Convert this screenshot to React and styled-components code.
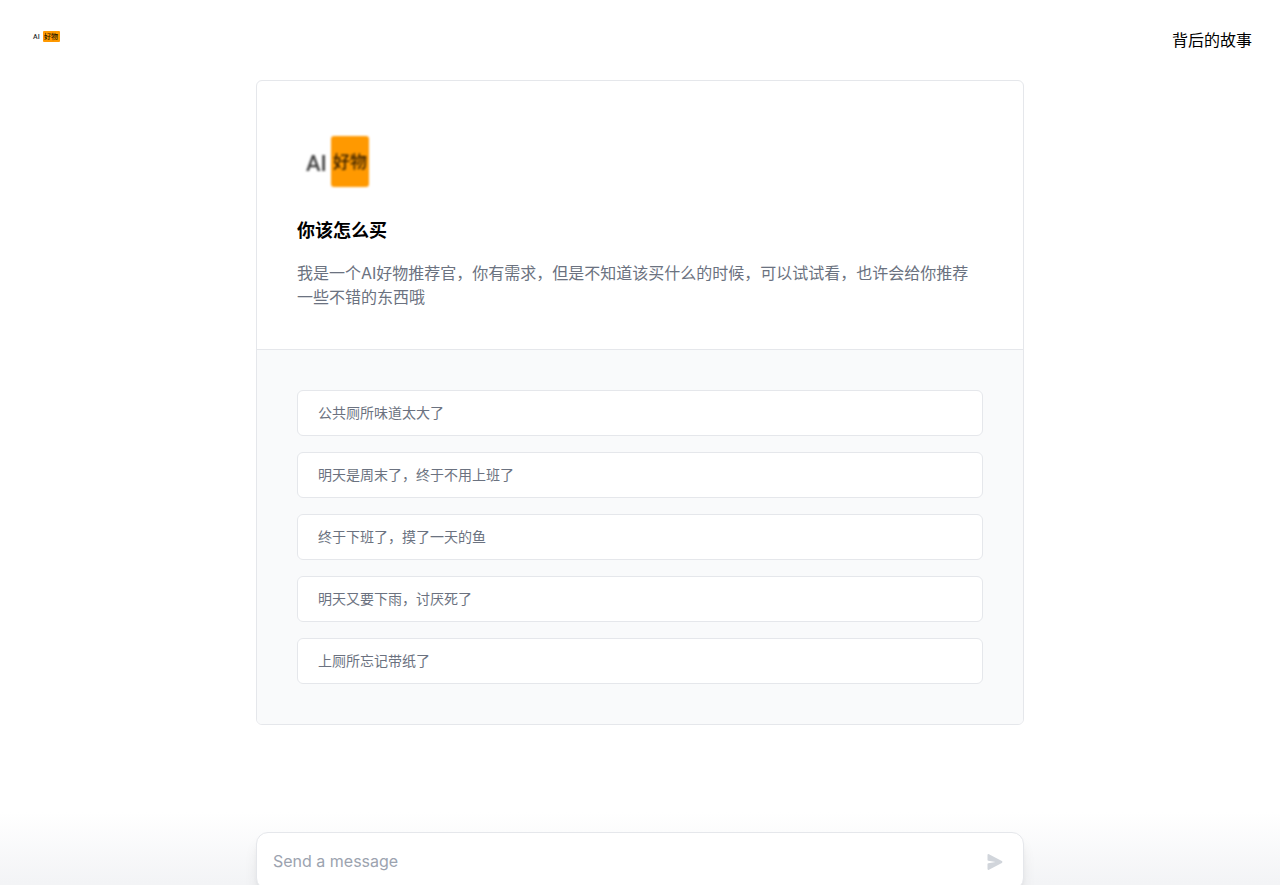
import React, { Fragment, useState } from "react";
import styled, { createGlobalStyle } from "styled-components";

const GlobalStyle = createGlobalStyle`
  *, *::before, *::after {
    box-sizing: border-box;
  }

  body {
    margin: 0;
    background-color: #ffffff;
    color: #000000;
    font-family: Inter, "Noto Sans CJK SC", sans-serif;
    font-size: 16px;
    line-height: 24px;
  }

  h1, p {
    margin: 0;
  }
`;

const Main = styled.main`
  display: flex;
  flex-direction: column;
  align-items: center;
  height: 100vh;
  overflow-y: auto;
  scrollbar-width: none;
`;

const Nav = styled.nav`
  display: flex;
  flex-shrink: 0;
  justify-content: space-between;
  align-items: flex-start;
  width: 100%;
  height: 80px;
  padding: 20px;
`;

const NavLink = styled.a`
  display: block;
  padding: 8px;
  color: inherit;
  text-decoration: none;
`;

const LogoSvg = styled.svg`
  display: block;
  filter: ${(props) => (props.$soft ? "blur(0.8px)" : "none")};

  text {
    font-family: Roboto, "Noto Sans CJK SC", sans-serif;
    font-weight: 500;
  }
`;

const Card = styled.section`
  flex-shrink: 0;
  width: 100%;
  max-width: 768px;
  border: 1px solid #e5e7eb;
  border-radius: 6px;
  overflow: hidden;
`;

const Intro = styled.div`
  display: flex;
  flex-direction: column;
  gap: 16px;
  padding: 40px;

  h1 {
    font-size: 18px;
    line-height: 28px;
    font-weight: 700;
  }

  p {
    color: #6b7280;
  }
`;

const Examples = styled.div`
  display: flex;
  flex-direction: column;
  gap: 16px;
  padding: 40px;
  border-top: 1px solid #e5e7eb;
  background-color: #f9fafb;
`;

const ExampleButton = styled.button`
  padding: 12px 20px;
  border: 1px solid #e5e7eb;
  border-radius: 6px;
  background-color: #ffffff;
  color: #6b7280;
  font-family: inherit;
  font-size: 14px;
  line-height: 20px;
  text-align: left;
  cursor: pointer;

  &:hover {
    border-color: #000000;
  }
`;

const Composer = styled.div`
  display: flex;
  flex-shrink: 0;
  justify-content: center;
  width: 100%;
  margin-top: 87px;
  padding: 20px 20px 64px;
  background-image: linear-gradient(to bottom, rgba(243, 244, 246, 0), #f3f4f6 50%, #f3f4f6);
`;

const MessageForm = styled.form`
  display: flex;
  align-items: center;
  width: 100%;
  max-width: 768px;
  padding: 16px;
  border: 1px solid #e5e7eb;
  border-radius: 12px;
  background-color: #ffffff;
  box-shadow: 0 10px 15px -3px rgba(0, 0, 0, 0.1), 0 4px 6px -4px rgba(0, 0, 0, 0.1);
`;

const MessageInput = styled.input`
  flex: 1;
  min-width: 0;
  height: 24px;
  padding: 0;
  border: none;
  outline: none;
  background: none;
  color: #000000;
  font: inherit;

  &::placeholder {
    color: #9ca3af;
    opacity: 1;
  }
`;

const SendButton = styled.button`
  display: flex;
  align-items: flex-end;
  justify-content: center;
  width: 24px;
  height: 24px;
  padding: 0 0 3px;
  border: none;
  background: none;
  color: #d1d5db;
  cursor: pointer;
`;

const examples = [
  "公共厕所味道太大了",
  "明天是周末了，终于不用上班了",
  "终于下班了，摸了一天的鱼",
  "明天又要下雨，讨厌死了",
  "上厕所忘记带纸了",
];

function SmallLogo() {
  return (
    <LogoSvg width="36" height="17" viewBox="0 0 36 17" role="img" aria-label="AI 好物">
      <text x="5" y="11" fontSize="7" fill="#333333">AI</text>
      <rect x="15" y="3" width="17" height="11" rx="1" fill="#ff9900" />
      <text x="16" y="11" fontSize="7" fill="#2b1a00">好物</text>
    </LogoSvg>
  );
}

function LargeLogo() {
  return (
    <LogoSvg $soft width="80" height="80" viewBox="0 0 80 80" role="img" aria-label="AI 好物">
      <text x="9" y="50" fontSize="22" fill="#444444">AI</text>
      <rect x="34" y="15" width="38" height="51" rx="3" fill="#ff9900" />
      <text x="36" y="47" fontSize="17" fill="#3a2200">好物</text>
    </LogoSvg>
  );
}

function SendIcon() {
  return (
    <svg width="16" height="16" viewBox="0 0 16 16" fill="currentColor" aria-hidden="true">
      <path d="M.5 1.163A1 1 0 0 1 1.97.28l12.868 6.837a1 1 0 0 1 0 1.766L1.969 15.72A1 1 0 0 1 .5 14.836V10.33a1 1 0 0 1 .816-.983L8.5 8 1.316 6.653A1 1 0 0 1 .5 5.67V1.163Z" />
    </svg>
  );
}

function App() {
  const [message, setMessage] = useState("");

  return (
    <Fragment>
      <GlobalStyle />
      <Main>
        <Nav>
          <NavLink href="/">
            <SmallLogo />
          </NavLink>
          <NavLink href="/story">背后的故事</NavLink>
        </Nav>

        <Card>
          <Intro>
            <LargeLogo />
            <h1>你该怎么买</h1>
            <p>我是一个AI好物推荐官，你有需求，但是不知道该买什么的时候，可以试试看，也许会给你推荐一些不错的东西哦</p>
          </Intro>
          <Examples>
            {examples.map((example) => (
              <ExampleButton key={example} type="button" onClick={() => setMessage(example)}>
                {example}
              </ExampleButton>
            ))}
          </Examples>
        </Card>

        <Composer>
          <MessageForm onSubmit={(e) => e.preventDefault()}>
            <MessageInput
              aria-label="Send a message"
              placeholder="Send a message"
              value={message}
              onChange={(e) => setMessage(e.target.value)}
            />
            <SendButton type="submit" aria-label="Send">
              <SendIcon />
            </SendButton>
          </MessageForm>
        </Composer>
      </Main>
    </Fragment>
  );
}

export default App;
